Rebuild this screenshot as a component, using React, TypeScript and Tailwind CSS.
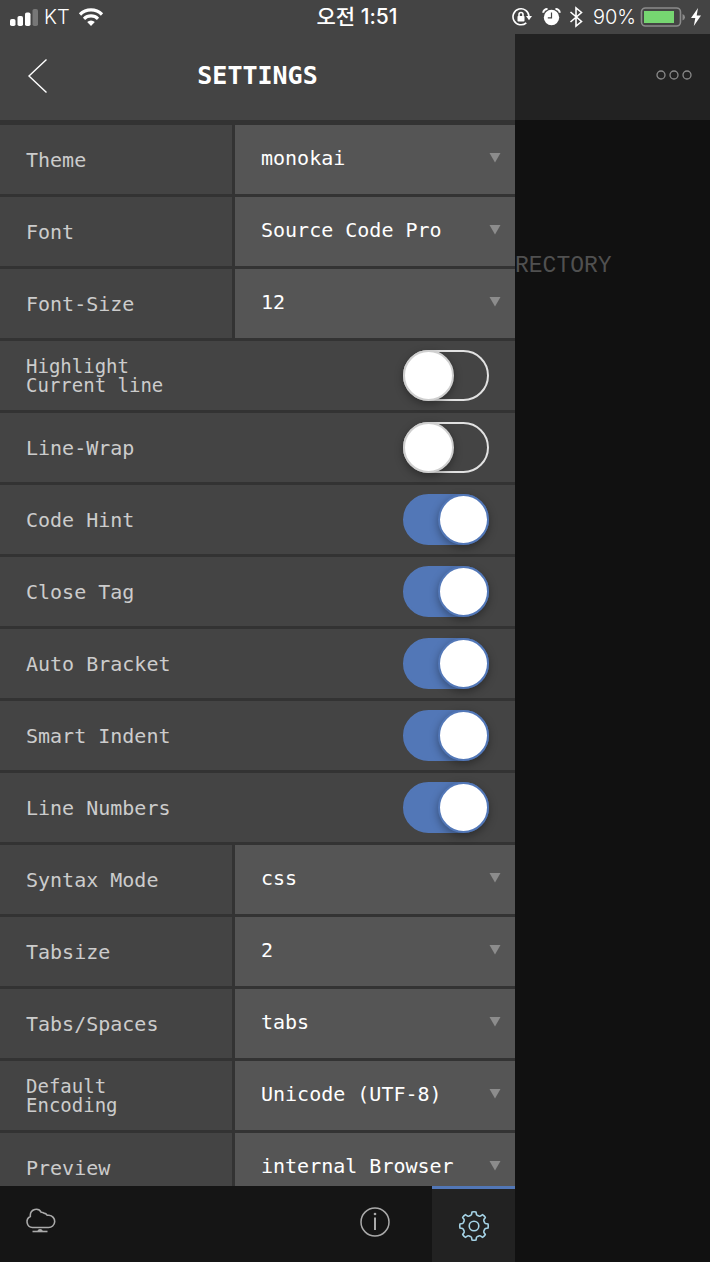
import React, { useState } from 'react';

type SelectItem = { kind: 'select'; id: string; label: string; options: string[] };
type ToggleItem = { kind: 'toggle'; id: string; label: string; on: boolean };
type Item = SelectItem | ToggleItem;

const ITEMS: Item[] = [
  { kind: 'select', id: 'theme', label: 'Theme', options: ['monokai'] },
  { kind: 'select', id: 'font', label: 'Font', options: ['Source Code Pro'] },
  { kind: 'select', id: 'font-size', label: 'Font-Size', options: ['12'] },
  { kind: 'toggle', id: 'highlight', label: 'Highlight\nCurrent line', on: false },
  { kind: 'toggle', id: 'wrap', label: 'Line-Wrap', on: false },
  { kind: 'toggle', id: 'hint', label: 'Code Hint', on: true },
  { kind: 'toggle', id: 'close-tag', label: 'Close Tag', on: true },
  { kind: 'toggle', id: 'bracket', label: 'Auto Bracket', on: true },
  { kind: 'toggle', id: 'indent', label: 'Smart Indent', on: true },
  { kind: 'toggle', id: 'numbers', label: 'Line Numbers', on: true },
  { kind: 'select', id: 'syntax', label: 'Syntax Mode', options: ['css'] },
  { kind: 'select', id: 'tabsize', label: 'Tabsize', options: ['2'] },
  { kind: 'select', id: 'tabs', label: 'Tabs/Spaces', options: ['tabs'] },
  { kind: 'select', id: 'encoding', label: 'Default\nEncoding', options: ['Unicode (UTF-8)'] },
  { kind: 'select', id: 'preview', label: 'Preview', options: ['internal Browser'] },
];

const StatusBar = () => (
  <div className="flex h-[34px] shrink-0 items-center bg-[#444] px-2 font-['Inter','Noto_Sans_CJK_KR',sans-serif] text-[20px] leading-6 text-white">
    <div className="flex flex-1 items-center">
      <svg width="32" height="20" viewBox="0 0 32 20" fill="#fff" aria-hidden="true">
        <rect x="2" y="12" width="5.500" height="7" rx="1.800" />
        <rect x="9.500" y="9" width="5.500" height="10" rx="1.800" />
        <rect x="17" y="5.500" width="5.500" height="13.500" rx="1.800" />
        <rect x="24.500" y="2" width="5.500" height="17" rx="1.800" fill="#777" />
      </svg>
      <span className="ml-1 font-light">KT</span>
      <svg className="ml-2" width="26" height="20" viewBox="0 0 26 20" aria-hidden="true">
        <path d="M2 7.500a15.600 15.600 0 0 1 22 0" fill="none" stroke="#fff" strokeWidth="3.200" />
        <path d="M6 11.800a10 10 0 0 1 14 0" fill="none" stroke="#fff" strokeWidth="3.200" />
        <path d="M13 19l-3.800-3.900a5.400 5.400 0 0 1 7.600 0z" fill="#fff" />
      </svg>
    </div>
    <span className="pl-1 text-[21px] font-medium">오전 1:51</span>
    <div className="flex flex-1 items-center justify-end">
      <svg width="20" height="20" viewBox="0 0 20 20" fill="none" stroke="#fff" strokeWidth="1.600" aria-hidden="true">
        <path d="M14.300 15.800A8 8 0 1 1 17 9.500" />
        <path d="M14 9h6l-3 4.200z" fill="#fff" stroke="none" />
        <rect x="5.500" y="9" width="7" height="5.500" rx="0.800" fill="#fff" stroke="none" />
        <path d="M7 9.500V7.500a2 2 0 0 1 4 0v2" />
      </svg>
      <svg className="ml-2.5" width="19" height="20" viewBox="0 0 19 20" aria-hidden="true">
        <circle cx="9.500" cy="10.500" r="7.700" fill="#fff" />
        <path d="M1.200 5.800A4 4 0 0 1 5.500 2M17.800 5.800A4 4 0 0 0 13.500 2" fill="none" stroke="#fff" strokeWidth="2" />
        <path d="M9.500 5.500v5.300H5.800" fill="none" stroke="#444" strokeWidth="1.200" />
      </svg>
      <svg className="ml-2" width="14" height="22" viewBox="0 0 14 22" fill="none" stroke="#fff" strokeWidth="1.600" aria-hidden="true">
        <path d="M1.500 6l11 9.500L7 20V2l5.500 4.500-11 9.500" />
      </svg>
      <span className="ml-2.5 font-light">90%</span>
      <svg className="ml-1" width="46" height="20" viewBox="0 0 46 20" aria-hidden="true">
        <rect x="1.500" y="1" width="39" height="18" rx="4" fill="none" stroke="#8b8b8b" strokeWidth="1.600" />
        <rect x="4" y="4" width="30" height="12" fill="#76d671" />
        <path d="M42.500 7v6.500q2.500-1 2.500-3.200t-2.500-3.300z" fill="#8b8b8b" />
      </svg>
      <svg className="ml-1" width="12" height="20" viewBox="0 0 12 20" fill="#fff" aria-hidden="true">
        <path d="M8 1L1 11h4.300L3.800 19 11 8.500H6.700z" />
      </svg>
    </div>
  </div>
);

const Label = ({ item }: { item: Item }) => (
  <label
    htmlFor={item.id}
    className={
      item.label.includes('\n')
        ? 'whitespace-pre pl-[26px] text-[19px] leading-[19px] text-[#ccc]'
        : 'whitespace-pre pl-[26px] text-[20px] leading-6 text-[#ccc]'
    }
  >
    {item.label}
  </label>
);

const SelectRow = ({ item }: { item: SelectItem }) => (
  <div className="flex h-[69px] shrink-0 gap-[3px]">
    <div className="flex w-[232px] shrink-0 items-center bg-[#444]">
      <Label item={item} />
    </div>
    <div className="relative min-w-0 flex-1 bg-[#555]">
      <select id={item.id} className="size-full appearance-none bg-transparent pb-1 pl-[26px] pr-8 text-[20px] text-white outline-none">
        {item.options.map(o => <option key={o}>{o}</option>)}
      </select>
      <svg className="pointer-events-none absolute right-[14px] top-7" width="12" height="10" viewBox="0 0 12 10" aria-hidden="true">
        <path d="M0.500 0h11L6 9.500z" fill="#8c8c8c" />
      </svg>
    </div>
  </div>
);

const ToggleRow = ({ item }: { item: ToggleItem }) => {
  const [on, setOn] = useState(item.on);
  return (
    <div className="flex h-[69px] shrink-0 items-center justify-between bg-[#444] pr-[26px]">
      <Label item={item} />
      <input
        id={item.id}
        type="checkbox"
        role="switch"
        checked={on}
        onChange={e => setOn(e.target.checked)}
        className="flex h-[51px] w-[86px] shrink-0 appearance-none items-center rounded-full border-2 border-[#e2e2e2] before:-ml-0.5 before:size-[51px] before:shrink-0 before:rounded-full before:border-2 before:border-[#cfcfcf] before:bg-white before:shadow-[0_3px_8px_rgba(0,0,0,0.35)] before:content-[''] checked:justify-end checked:border-[#5277b7] checked:bg-[#5277b7] checked:before:-mr-0.5 checked:before:border-[#5277b7]"
      />
    </div>
  );
};

// Eight rounded teeth around a 32px box
const gearPath = () => {
  const pt = (r: number, deg: number) => {
    const a = ((deg - 90) * Math.PI) / 180;
    return `${(16 + r * Math.cos(a)).toFixed(2)} ${(16 + r * Math.sin(a)).toFixed(2)}`;
  };
  let d = '';
  for (let i = 0; i < 8; i++) {
    const c = i * 45;
    d += `${i === 0 ? 'M' : 'L'}${pt(14.2, c - 8)} Q${pt(14.5, c)} ${pt(14.2, c + 8)}`;
    d += ` L${pt(11.8, c + 12)} Q${pt(10.6, c + 18)} ${pt(11.2, c + 22.5)} Q${pt(10.6, c + 27)} ${pt(11.8, c + 33)}`;
  }
  return d + 'Z';
};

const Footer = () => (
  <nav className="flex h-[76px] shrink-0 items-stretch bg-[#151515]">
    <button aria-label="Cloud" className="flex items-center pb-2 pl-6">
      <svg width="32" height="32" viewBox="0 0 32 32" fill="none" stroke="#aaa" strokeWidth="1.600" aria-hidden="true">
        <path d="M8.500 23.500h15.700a6 6 0 0 0 .8-12.200h-1.700q-1.200-2-3.500-2.200-1-.9-2.500-.8a5.900 5.900 0 0 0-11 2.700v1.500a5.800 5.800 0 0 0 2.200 11z" />
        <path d="M8.500 27.500h15" />
        <path d="M13.500 27.500a2.600 2.600 0 0 1 5.200 0z" fill="#aaa" stroke="none" />
      </svg>
    </button>
    <button aria-label="Info" className="ml-auto flex w-[115px] items-center justify-center pb-1">
      <svg width="32" height="32" viewBox="0 0 32 32" fill="none" stroke="#aaa" strokeWidth="1.500" aria-hidden="true">
        <circle cx="16" cy="16" r="14" />
        <path d="M16 11.500V24" strokeWidth="2" />
        <circle cx="16" cy="8" r="1.300" fill="#aaa" stroke="none" />
      </svg>
    </button>
    <button aria-label="Settings" className="flex w-[83px] items-center justify-center border-t-[3px] border-[#5277b7] bg-[#222]">
      <svg width="32" height="32" viewBox="0 0 32 32" fill="none" stroke="#a5d3e6" strokeWidth="1.600" strokeLinejoin="round" aria-hidden="true">
        <path d={gearPath()} />
        <circle cx="16" cy="16" r="4.800" />
      </svg>
    </button>
  </nav>
);

export default function App() {
  return (
    <div className="flex h-screen flex-col overflow-hidden bg-[#111] font-['DejaVu_Sans_Mono','Liberation_Mono',monospace]">
      <StatusBar />
      <div className="flex min-h-0 flex-1">
        <aside className="flex min-w-0 flex-1 flex-col bg-[#333]">
          <header className="grid h-[86px] shrink-0 grid-cols-[64px_1fr_64px] items-center bg-[#444] pb-0.5">
            <button aria-label="Back" className="pl-[26px]">
              <svg width="24" height="36" viewBox="0 0 24 36" fill="none" stroke="#fff" strokeWidth="1.400" aria-hidden="true">
                <path d="M20.500 1.500L3 18l17.500 16.500" />
              </svg>
            </button>
            <h1 className="text-center text-[25px] font-bold leading-8 text-white">SETTINGS</h1>
          </header>
          <div className="flex min-h-0 flex-1 flex-col gap-[3px] overflow-hidden pt-[5px]">
            {ITEMS.map(item =>
              item.kind === 'select'
                ? <SelectRow key={item.id} item={item} />
                : <ToggleRow key={item.id} item={item} />
            )}
          </div>
          <Footer />
        </aside>
        <main className="w-[195px] shrink-0 overflow-hidden">
          <div className="flex h-[86px] items-center justify-end bg-[#222] pb-1 pr-[18px]">
            <button aria-label="More">
              <svg width="36" height="12" viewBox="0 0 36 12" fill="none" stroke="#8a8a8a" strokeWidth="1.300" aria-hidden="true">
                <circle cx="5" cy="6" r="4" />
                <circle cx="18" cy="6" r="4" />
                <circle cx="31" cy="6" r="4" />
              </svg>
            </button>
          </div>
          <p className="mt-[130px] font-['Liberation_Mono',monospace] text-[23px] leading-8 text-[#505050]">RECTORY</p>
        </main>
      </div>
    </div>
  );
}
